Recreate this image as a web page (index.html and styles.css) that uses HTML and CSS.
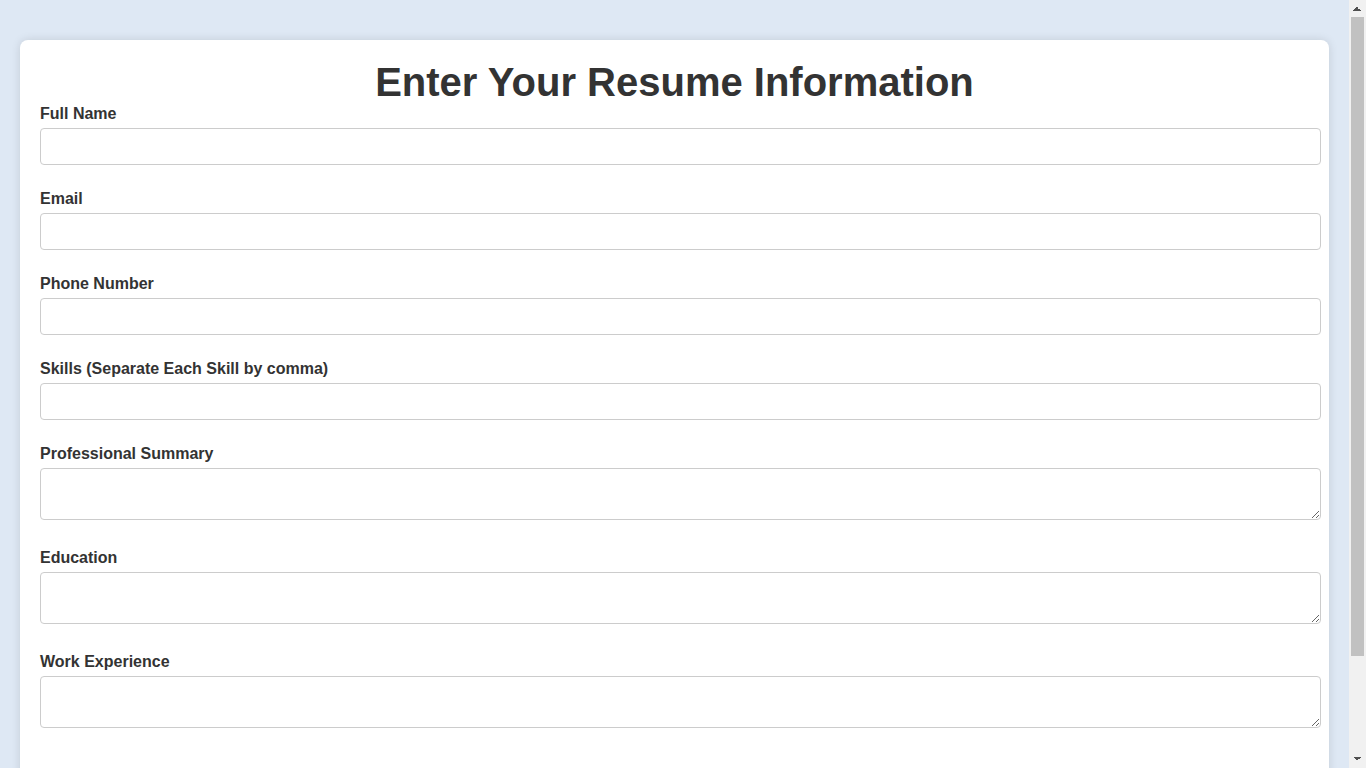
FILE: index.html
```html
<!DOCTYPE html>
<html lang="en">
<head>
<meta charset="utf-8">
<title>Resume Builder</title>
<link rel="stylesheet" href="styles.css">
</head>
<body>
<div class="card">
  <h1 class="title">Enter Your Resume Information</h1>
  <form class="form">
    <label class="label" for="name">Full Name</label>
    <input class="field" id="name" type="text">
    <label class="label" for="email">Email</label>
    <input class="field" id="email" type="email">
    <label class="label" for="phone">Phone Number</label>
    <input class="field" id="phone" type="text">
    <label class="label" for="skills">Skills (Separate Each Skill by comma)</label>
    <input class="field" id="skills" type="text">
    <label class="label" for="summary">Professional Summary</label>
    <textarea class="area" id="summary"></textarea>
    <label class="label" for="education">Education</label>
    <textarea class="area" id="education"></textarea>
    <label class="label" for="work">Work Experience</label>
    <textarea class="area" id="work"></textarea>
    <button class="submit" type="button">Generate Resume</button>
  </form>
</div>
<div class="scrollbar" aria-hidden="true">
  <div class="sb-btn sb-up"></div>
  <div class="sb-track"><div class="sb-thumb"></div></div>
  <div class="sb-btn sb-down"></div>
</div>
</body>
</html>
```
FILE: styles.css
```css
html, body {
  margin: 0;
  padding: 0;
}
body {
  background: #dee8f4;
  font-family: "Liberation Sans", Arial, sans-serif;
  color: #333;
  padding: 40px 37px 40px 20px;
}
.card {
  background: #fff;
  border-radius: 8px;
  box-shadow: 0 0 10px rgba(0, 0, 0, 0.12);
  padding: 20px;
}
.title {
  margin: 0;
  font-size: 40px;
  line-height: 44px;
  text-align: center;
  color: #333;
}
.form {
  display: flex;
  flex-direction: column;
  align-items: flex-start;
}
.label {
  display: block;
  font-size: 16px;
  font-weight: bold;
  line-height: 20px;
  margin-bottom: 4px;
  color: #333;
}
.field, .area {
  display: block;
  width: 100%;
  padding: 5px;
  border: 1px solid #ccc;
  border-radius: 4px;
  font-family: "Liberation Sans", Arial, sans-serif;
  font-size: 16px;
  background: #fff;
  margin: 0;
}
.field {
  height: 25px;
  margin-bottom: 24px;
}
.area {
  height: 40px;
  margin-bottom: 28px;
}
.submit {
  margin-top: 16px;
  padding: 14px 20px;
  background: #4a90e2;
  color: #fff;
  border: none;
  border-radius: 4px;
  font-size: 16px;
  font-family: "Liberation Sans", Arial, sans-serif;
  font-weight: bold;
  margin-bottom: 5px;
}

/* simulated classic scrollbar overlay */
.scrollbar {
  position: fixed;
  top: 0;
  right: 0;
  width: 17px;
  height: 100vh;
  background: #f1f1f1;
  display: flex;
  flex-direction: column;
}
.sb-btn {
  height: 17px;
  flex: none;
  background-repeat: no-repeat;
  background-size: 4px 4px, 4px 4px;
}
.sb-up {
  background-image:
    linear-gradient(to top left, #505050 50%, transparent 50%),
    linear-gradient(to top right, #505050 50%, transparent 50%);
  background-position: 4px 7px, 8px 7px;
}
.sb-down {
  background-image:
    linear-gradient(to bottom left, #505050 50%, transparent 50%),
    linear-gradient(to bottom right, #505050 50%, transparent 50%);
  background-position: 4px 6px, 8px 6px;
}
.sb-track {
  flex: 1;
  padding: 0 2px;
}
.sb-thumb {
  height: 639px;
  background: #c1c1c1;
}
```
